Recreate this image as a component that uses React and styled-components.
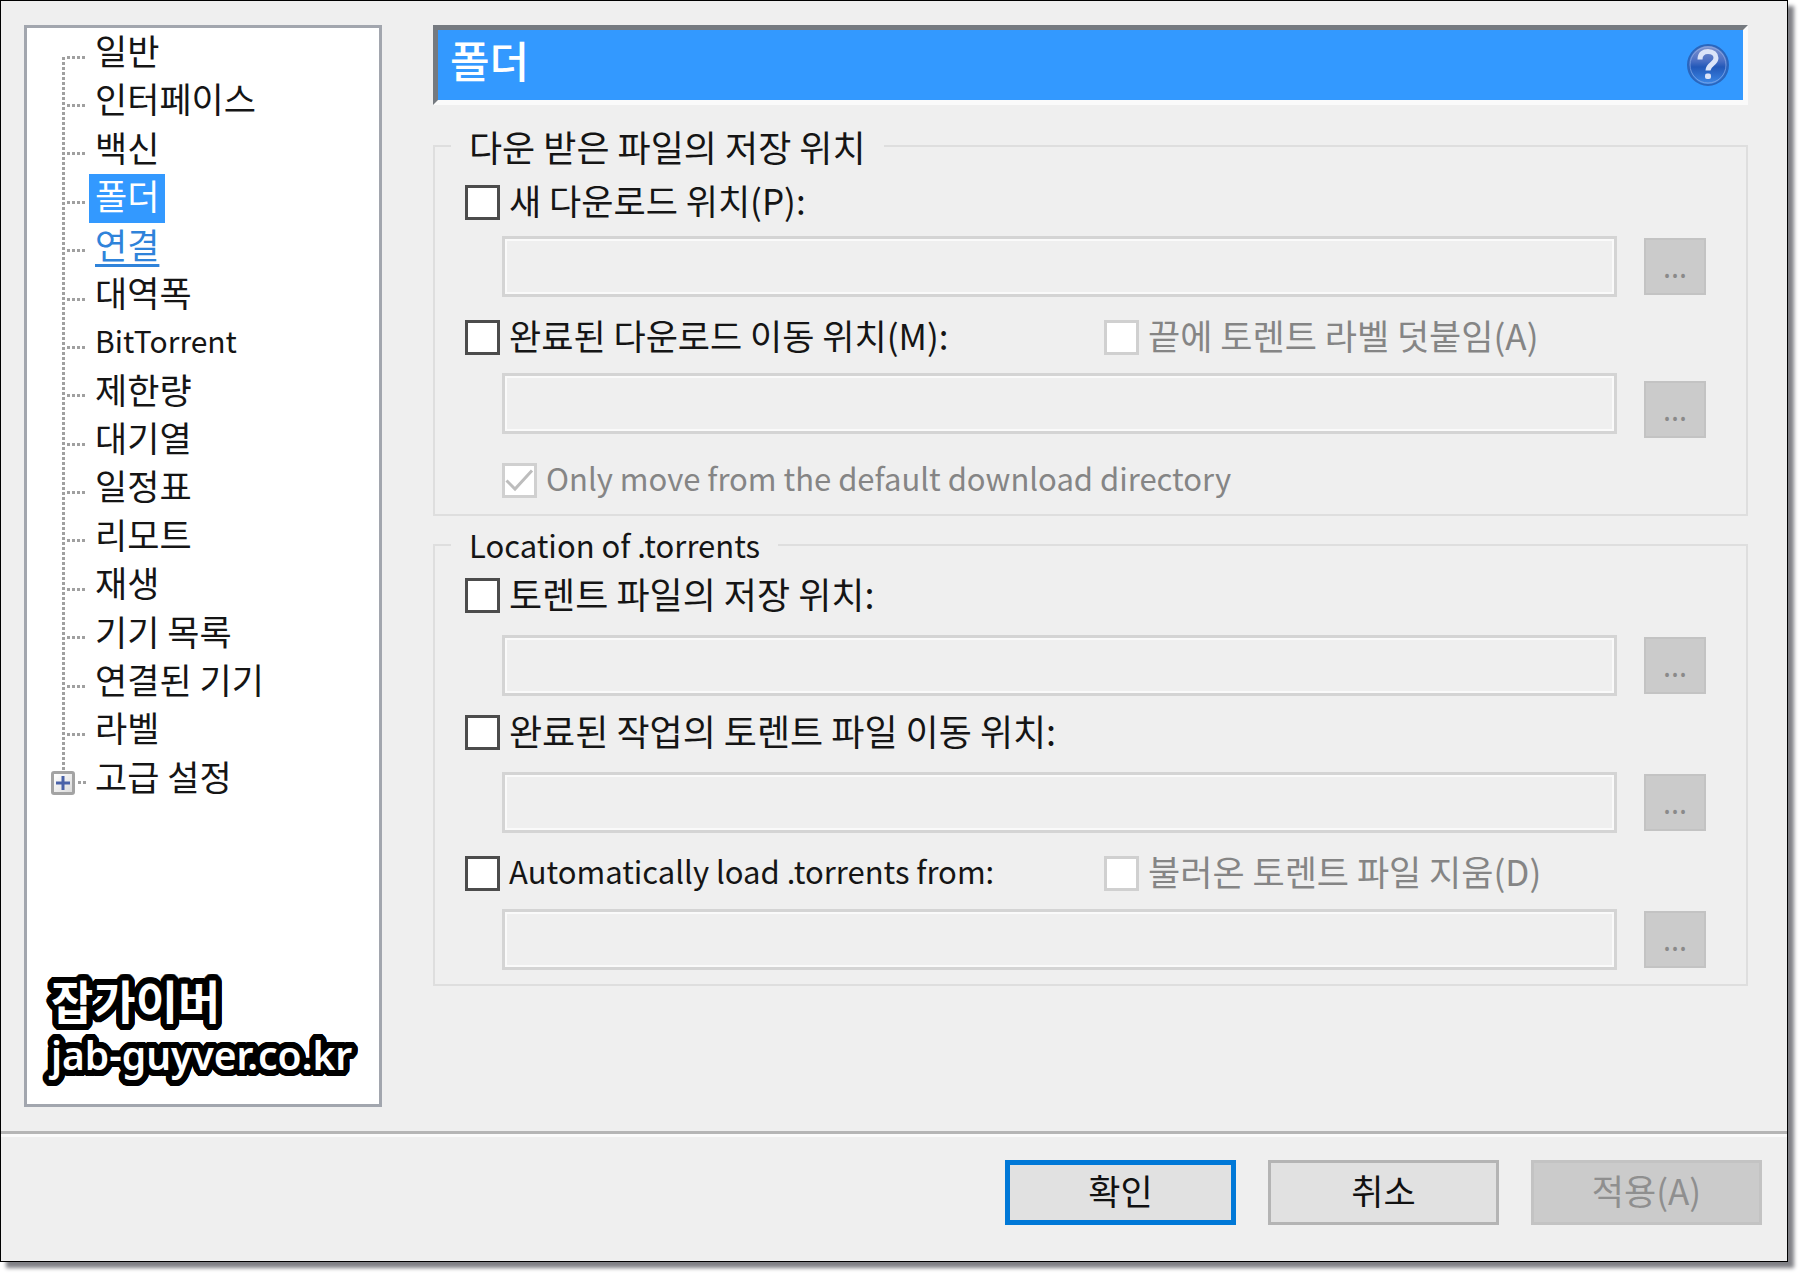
import React from "react";
import styled, { createGlobalStyle, css } from "styled-components";

const GlobalStyle = createGlobalStyle`
  *, *::before, *::after { box-sizing: border-box; }
  body {
    margin: 0;
    background: #fff;
    color: #151515;
    font-family: "Noto Sans CJK KR", "Noto Sans", sans-serif;
    font-size: 35px;
    line-height: 44px;
  }
  button, input { font: inherit; color: inherit; margin: 0; padding: 0; }
`;

const TEXT_SIZES = { latin: "31px", mixed: "35px", hangul: "36px" };

const Page = styled.div`
  min-height: 100vh;
  padding: 0 12px 12px 0;
  display: flex;
`;

const Dialog = styled.form`
  flex: 1;
  display: flex;
  flex-direction: column;
  background: #efefef;
  border: 1px solid #000;
  box-shadow: 6px 6px 4px #808186;
`;

const Main = styled.div`
  flex: 1;
  display: flex;
  gap: 51px;
  padding: 24px 39px 24px 23px;
`;

const Sidebar = styled.nav`
  width: 358px;
  flex: none;
  display: flex;
  flex-direction: column;
  padding: 1px 8px 18px 24px;
  background: #fff;
  border: 3px solid #a2a6ae;
`;

const Tree = styled.ul`
  position: relative;
  list-style: none;
  margin: 0;
  padding: 0;
  height: 774px;
  display: flex;
  flex-direction: column;

  &::before {
    content: "";
    position: absolute;
    left: 11px;
    top: 28px;
    bottom: 32px;
    width: 3px;
    background: repeating-linear-gradient(#a0a0a0 0 3px, #fff 3px 5px);
  }
`;

const TreeItem = styled.li`
  flex: 1;
  display: flex;
`;

const Gutter = styled.span`
  width: 38px;
  flex: none;
  display: flex;
  align-items: center;
  padding: 8px 2px 0 ${(p) => (p.$expandable ? "0" : "16px")};
  gap: 3px;

  &::after {
    content: "";
    flex: 1;
    height: 3px;
    background: repeating-linear-gradient(90deg, #a0a0a0 0 3px, #fff 3px 5px);
  }
`;

const Expander = styled.button`
  position: relative;
  width: 24px;
  height: 24px;
  display: grid;
  place-items: center;
  border: 3px solid #a3a3a3;
  border-radius: 3px;
  background: linear-gradient(135deg, #fff, #dcdcdc);
`;

const TreeLink = styled.a`
  padding: 0 6px 4px;
  color: #151515;
  text-decoration: none;
  white-space: nowrap;
  line-height: 42px;
  font-size: ${(p) => (p.$latin ? "30px" : "35px")};
  ${(p) => p.$selected && css`
    background: #3399ff;
    color: #fff;
  `}
  ${(p) => p.$hot && css`
    color: #2f83da;
    text-decoration: underline;
    text-decoration-thickness: 3px;
    text-underline-offset: 5px;
  `}
`;

/* A round pen outline, built from copies of the text set on a circle. */
const outline = (radius, color) =>
  Array.from({ length: 32 }, (_, i) => {
    const a = (i * Math.PI) / 16;
    return `${(radius * Math.cos(a)).toFixed(2)}px ${(radius * Math.sin(a)).toFixed(2)}px 0 ${color}`;
  })
    .concat([`3px 0 0 ${color}`, `-3px 0 0 ${color}`, `0 3px 0 ${color}`, `0 -3px 0 ${color}`])
    .join(", ");

const Brand = styled.div`
  margin-top: auto;
  color: #fff;
  text-shadow: ${outline(6, "#000")};
  white-space: nowrap;
`;

const BrandName = styled.div`
  font-size: 46px;
  font-weight: 700;
  line-height: 50px;
`;

const BrandSite = styled.div`
  font-family: "Noto Sans", sans-serif;
  font-size: 39px;
  font-weight: 600;
  line-height: 62px;
`;

const Content = styled.main`
  flex: 1;
  min-width: 0;
  display: flex;
  flex-direction: column;
`;

const Banner = styled.header`
  display: flex;
  align-items: center;
  justify-content: space-between;
  height: 80px;
  padding: 0 13px 0 12px;
  background: #3399ff;
  border: 5px solid;
  border-color: #757a80 #fafafa #fafafa #757a80;
`;

const Title = styled.h1`
  margin: 0;
  padding-bottom: 12px;
  color: #fff;
  font-size: 43px;
  line-height: 58px;
  font-weight: 500;
`;

const HelpButton = styled.button`
  display: flex;
  border: 0;
  background: none;
`;

const Group = styled.fieldset`
  min-width: 0;
  margin: ${(p) => p.$space} 0 0;
  padding: ${(p) => p.$top} 40px ${(p) => p.$bottom} 30px;
  border: 2px solid #dedede;
`;

const Legend = styled.legend`
  margin-left: -14px;
  padding: 0 18px;
  font-size: ${(p) => TEXT_SIZES[p.$size]};
`;

const Options = styled.div`
  display: grid;
  grid-template-columns: 639px 1fr;
  margin-left: ${(p) => (p.$indent ? "37px" : "0")};
  margin-top: ${(p) => p.$space || "0"};
`;

const OptionLabel = styled.label`
  display: flex;
  align-items: center;
  gap: 9px;
  height: 44px;
  white-space: nowrap;
  font-size: ${(p) => TEXT_SIZES[p.$size]};
  color: ${(p) => (p.$disabled ? "#858585" : "#151515")};
`;

const OptionText = styled.span`
  padding-bottom: 4px;
`;

const CheckSlot = styled.span`
  display: grid;
  width: 35px;
  height: 35px;
  flex: none;
  > * { grid-area: 1 / 1; }
`;

const CheckInput = styled.input`
  appearance: none;
  width: 35px;
  height: 35px;
  background: #fff;
  border: 3px solid #4c4c4c;
  &:disabled { border-color: #d0d0d0; }
`;

const PathRow = styled.div`
  display: flex;
  align-items: flex-start;
  gap: 27px;
  margin: ${(p) => p.$space} 0 0 37px;
`;

const PathInput = styled.input`
  flex: 1;
  min-width: 0;
  height: 61px;
  padding: 0 8px;
  background: #efefef;
  border: 3px solid #d4d4d4;
  box-shadow: inset 0 0 0 2px #fafafa;
  border-radius: 0;
`;

const BrowseButton = styled.button`
  width: 62px;
  height: 57px;
  flex: none;
  margin-top: ${(p) => (p.$low ? "8px" : "2px")};
  border: 2px solid #c3c3c3;
  background: #cbcbcb;
  color: #8a8a8a;
  font-family: "Noto Sans", sans-serif;
  font-size: 30px;
  line-height: 44px;
`;

const Footer = styled.footer`
  display: flex;
  justify-content: flex-end;
  gap: 32px;
  padding: 26px 25px 36px;
  border-top: 3px solid #b5b5b5;
  box-shadow: inset 0 3px 0 #fafafa;
`;

const ActionButton = styled.button`
  width: 231px;
  height: 65px;
  padding-bottom: 6px;
  color: #111;
  background: #e1e1e1;
  border: ${(p) => (p.$primary ? "5px solid #0078d7" : "3px solid #b4b4b4")};
  &:disabled {
    color: #8f8f8f;
    background: #cbcbcb;
    border-color: #c3c3c3;
  }
`;

const SECTIONS = [
  "일반", "인터페이스", "백신", "폴더", "연결", "대역폭", "BitTorrent", "제한량",
  "대기열", "일정표", "리모트", "재생", "기기 목록", "연결된 기기", "라벨", "고급 설정",
];

function HelpIcon() {
  return (
    <svg width="44" height="44" viewBox="0 0 44 44" aria-hidden="true">
      <defs>
        <linearGradient id="ball" x1="0" y1="0" x2="0" y2="1">
          <stop offset="0" stopColor="#8295cf" />
          <stop offset="0.4" stopColor="#4a6fc4" />
          <stop offset="0.55" stopColor="#2258b8" />
          <stop offset="1" stopColor="#3d8bea" />
        </linearGradient>
      </defs>
      <circle cx="22" cy="22" r="20" fill="url(#ball)" stroke="#2a66bd" strokeWidth="2" />
      <circle cx="22" cy="22" r="18" fill="none" stroke="#8fb0ea" strokeWidth="1" opacity="0.7" />
      <path d="M14 16.500C14 10.500 18 8.500 22 8.500c5 0 8 3 8 6.500 0 6-8 6-8 12.500" fill="none" stroke="#dbe4f8" strokeWidth="5" />
      <rect x="19" y="30.500" width="6" height="5.500" rx="2" fill="#dbe4f8" />
    </svg>
  );
}

function Check({ children, size = "mixed", ...rest }) {
  return (
    <OptionLabel $size={size} $disabled={rest.disabled}>
      <CheckSlot>
        <CheckInput type="checkbox" {...rest} />
        {rest.defaultChecked && (
          <svg width="35" height="35" viewBox="0 0 35 35" aria-hidden="true" pointerEvents="none">
            <path d="M4.500 17.500l8.500 8.500L30 7.500" fill="none" stroke="#bdbdbd" strokeWidth="3" />
          </svg>
        )}
      </CheckSlot>
      <OptionText>{children}</OptionText>
    </OptionLabel>
  );
}

function PathField({ label, space, low }) {
  return (
    <PathRow $space={space}>
      <PathInput type="text" aria-label={label} disabled />
      <BrowseButton type="button" aria-label={`${label} ...`} $low={low} disabled>...</BrowseButton>
    </PathRow>
  );
}

export default function App() {
  return (
    <Page>
      <GlobalStyle />
      <Dialog onSubmit={(e) => e.preventDefault()}>
        <Main>
          <Sidebar>
            <Tree>
              {SECTIONS.map((name) => (
                <TreeItem key={name}>
                  <Gutter $expandable={name === "고급 설정"}>
                    {name === "고급 설정" && (
                      <Expander type="button" aria-label={name}>
                        <svg width="16" height="16" viewBox="0 0 16 16" aria-hidden="true">
                          <path d="M8 1v14M1 8h14" stroke="#4a62a8" strokeWidth="3" />
                        </svg>
                      </Expander>
                    )}
                  </Gutter>
                  <TreeLink
                    href="#"
                    $selected={name === "폴더"}
                    $hot={name === "연결"}
                    $latin={name === "BitTorrent"}
                  >
                    {name}
                  </TreeLink>
                </TreeItem>
              ))}
            </Tree>
            <Brand>
              <BrandName>잡가이버</BrandName>
              <BrandSite>jab-guyver.co.kr</BrandSite>
            </Brand>
          </Sidebar>

          <Content>
            <Banner>
              <Title>폴더</Title>
              <HelpButton type="button" aria-label="?"><HelpIcon /></HelpButton>
            </Banner>

            <Group $space="19px" $top="12px" $bottom="12px">
              <Legend $size="hangul">다운 받은 파일의 저장 위치</Legend>
              <Options>
                <Check>새 다운로드 위치(P):</Check>
              </Options>
              <PathField label="새 다운로드 위치" space="12px" />
              <Options $space="18px">
                <Check>완료된 다운로드 이동 위치(M):</Check>
                <Check disabled>끝에 토렌트 라벨 덧붙임(A)</Check>
              </Options>
              <PathField label="완료된 다운로드 이동 위치" space="14px" low />
              <Options $space="20px" $indent>
                <Check size="latin" disabled defaultChecked>Only move from the default download directory</Check>
              </Options>
            </Group>

            <Group $space="7px" $top="6px" $bottom="14px">
              <Legend $size="latin">Location of .torrents</Legend>
              <Options>
                <Check size="hangul">토렌트 파일의 저장 위치:</Check>
              </Options>
              <PathField label="토렌트 파일의 저장 위치" space="18px" />
              <Options $space="14px">
                <Check size="hangul">완료된 작업의 토렌트 파일 이동 위치:</Check>
              </Options>
              <PathField label="완료된 작업의 토렌트 파일 이동 위치" space="18px" />
              <Options $space="18px">
                <Check size="latin">Automatically load .torrents from:</Check>
                <Check disabled>불러온 토렌트 파일 지움(D)</Check>
              </Options>
              <PathField label="Automatically load .torrents from" space="14px" />
            </Group>
          </Content>
        </Main>

        <Footer>
          <ActionButton type="submit" $primary>확인</ActionButton>
          <ActionButton type="button">취소</ActionButton>
          <ActionButton type="button" disabled>적용(A)</ActionButton>
        </Footer>
      </Dialog>
    </Page>
  );
}
